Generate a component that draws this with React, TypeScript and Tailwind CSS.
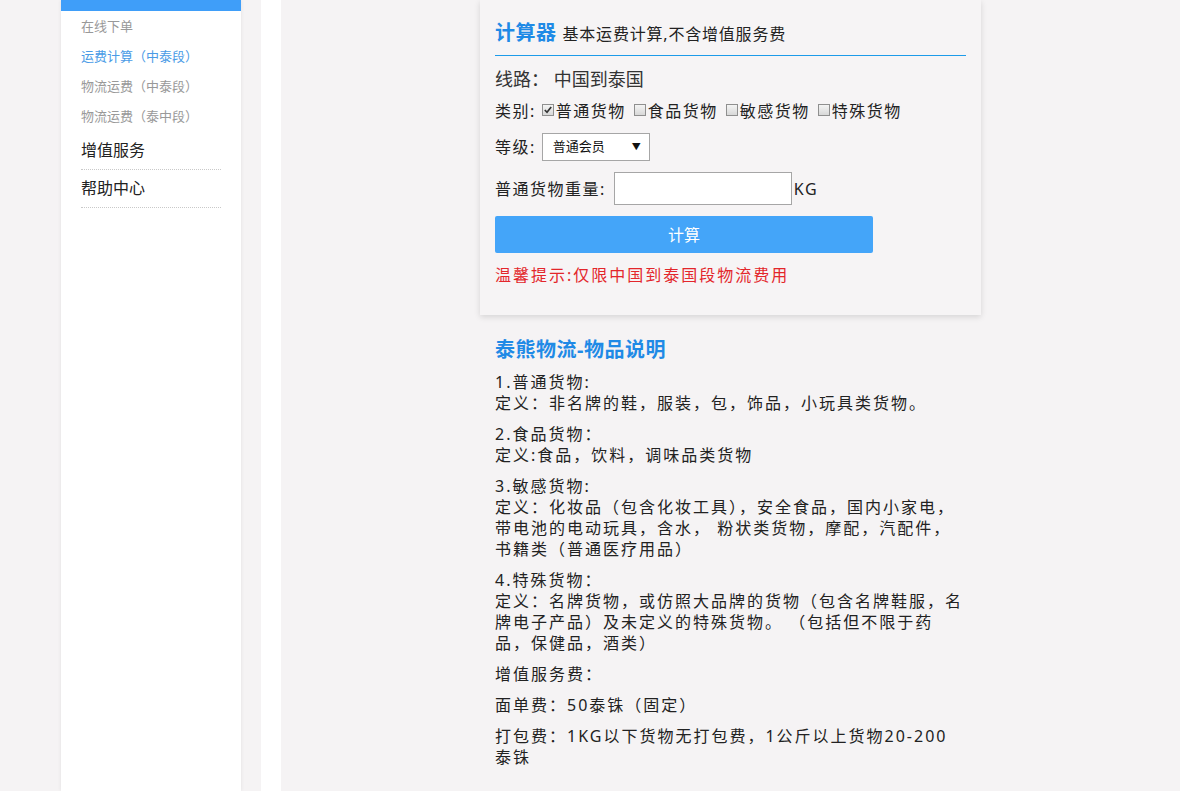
import React from 'react';

const subMenu = [
  { label: '在线下单', active: false },
  { label: '运费计算（中泰段）', active: true },
  { label: '物流运费（中泰段）', active: false },
  { label: '物流运费（泰中段）', active: false },
];

const mainMenu = ['增值服务', '帮助中心'];

const categories = [
  { label: '普通货物', checked: true },
  { label: '食品货物', checked: false },
  { label: '敏感货物', checked: false },
  { label: '特殊货物', checked: false },
];

const notes = [
  ['1.普通货物:', '定义：非名牌的鞋，服装，包，饰品，小玩具类货物。'],
  ['2.食品货物：', '定义:食品，饮料，调味品类货物'],
  ['3.敏感货物:', '定义：化妆品（包含化妆工具），安全食品，国内小家电，带电池的电动玩具，含水， 粉状类货物，摩配，汽配件，书籍类（普通医疗用品）'],
  ['4.特殊货物：', '定义：名牌货物，或仿照大品牌的货物（包含名牌鞋服，名牌电子产品）及未定义的特殊货物。 （包括但不限于药品，保健品，酒类）'],
  ['增值服务费：'],
  ['面单费：50泰铢（固定）'],
  ['打包费：1KG以下货物无打包费，1公斤以上货物20-200泰铢'],
];

const CheckBox: React.FC<{ checked: boolean }> = ({ checked }) => (
  <span className="inline-flex items-center justify-center w-[12px] h-[12px] border border-[#8f8f8f] bg-gradient-to-b from-[#f4f4f4] to-[#d8d8d8] mr-[2px] mb-[2px]">
    {checked && (
      <svg width="10" height="10" viewBox="0 0 10 10">
        <path d="M1.8 5 L4 7.3 L8.2 2" fill="none" stroke="#333" strokeWidth="1.7" />
      </svg>
    )}
  </span>
);

const Sidebar: React.FC = () => (
  <aside className="w-[180px] shrink-0 bg-white shadow-[0_0_4px_rgba(0,0,0,0.08)]">
    <div className="h-[11px] bg-[#3f9ef9]" />
    <ul className="pl-5 text-[13px]">
      {subMenu.map((item) => (
        <li
          key={item.label}
          className={`h-[30px] leading-[30px] ${item.active ? 'text-[#4a9be6]' : 'text-[#999]'}`}
        >
          {item.label}
        </li>
      ))}
    </ul>
    <ul className="mx-5 text-[16px] text-[#222]">
      {mainMenu.map((item, i) => (
        <li
          key={item}
          className={`${i === 0 ? 'h-[39px] leading-[38px]' : 'h-[38px] leading-[37px]'} border-b border-dotted border-[#c9c9c9]`}
        >
          {item}
        </li>
      ))}
    </ul>
  </aside>
);

const Calculator: React.FC = () => (
  <div className="w-[501px] bg-[#f6f4f5] px-[15px] pt-[19px] pb-[28px] shadow-[0_2px_6px_rgba(0,0,0,0.13)]">
    <div className="flex items-baseline gap-[6px] pb-[8px]">
      <h2 className="text-[20px] leading-[28px] font-bold tracking-[0.5px] text-[#1f8ae6]">计算器</h2>
      <span className="text-[16px] tracking-[0.8px] text-[#222]">基本运费计算,不含增值服务费</span>
    </div>
    <div className="h-[1px] bg-[#1d9be9]" />

    <p className="mt-[11px] text-[18px] leading-[24px] text-[#333]">线路： 中国到泰国</p>

    <div className="mt-[8px] flex items-center text-[16px] leading-[24px] tracking-[1.5px] text-[#222]">
      <span className="mr-[6px]">类别:</span>
      {categories.map((c) => (
        <label key={c.label} className="flex items-center mr-[8px]">
          <CheckBox checked={c.checked} />
          {c.label}
        </label>
      ))}
    </div>

    <div className="mt-[10px] flex items-center text-[16px] tracking-[1.5px] text-[#222]">
      <span className="mr-[6px]">等级:</span>
      <div className="w-[108px] h-[28px] bg-white border border-[#a6a6a6] flex items-center justify-between pl-[10px] pr-[8px] tracking-normal">
        <span className="text-[13px] text-[#111]">普通会员</span>
        <span className="text-[9px] text-[#111]">▼</span>
      </div>
    </div>

    <div className="mt-[11px] flex items-center text-[16px] tracking-[1.5px] text-[#222]">
      <span className="mr-[8px]">普通货物重量:</span>
      <input type="text" className="w-[178px] h-[33px] bg-white border border-[#a6a6a6] outline-none px-1" />
      <span className="ml-[2px]">KG</span>
    </div>

    <button className="mt-[11px] w-[378px] h-[37px] rounded-[2px] bg-[#44a5f9] text-white text-[16px]">
      计算
    </button>

    <p className="mt-[10px] text-[16px] leading-[24px] tracking-[2px] text-[#e3262b]">温馨提示:仅限中国到泰国段物流费用</p>
  </div>
);

const Notes: React.FC = () => (
  <div className="w-[501px] pl-[15px] pr-[17px] pt-[21px]">
    <h2 className="text-[20px] leading-[28px] font-bold tracking-[0.5px] text-[#1f8ae6]">泰熊物流-物品说明</h2>
    <div className="mt-[8px] text-[16px] leading-[21px] tracking-[2px] text-[#222]">
      {notes.map((p, i) => (
        <p key={i} className="mb-[10px]">
          {p.map((line, j) => (
            <span key={j} className="block">
              {line}
            </span>
          ))}
        </p>
      ))}
    </div>
  </div>
);

const App: React.FC = () => {
  return (
    <div
      className="min-h-[791px] flex bg-[#f5f3f4]"
      style={{ fontFamily: '"Noto Sans", "Noto Sans CJK SC", sans-serif' }}
    >
      <div className="w-[61px] shrink-0" />
      <Sidebar />
      <div className="w-[20px] shrink-0" />
      <div className="w-[20px] shrink-0 bg-white" />
      <main className="flex-1 flex flex-col items-center">
        <Calculator />
        <Notes />
      </main>
      <div className="w-[18px] shrink-0 bg-white" />
    </div>
  );
};

export default App;
